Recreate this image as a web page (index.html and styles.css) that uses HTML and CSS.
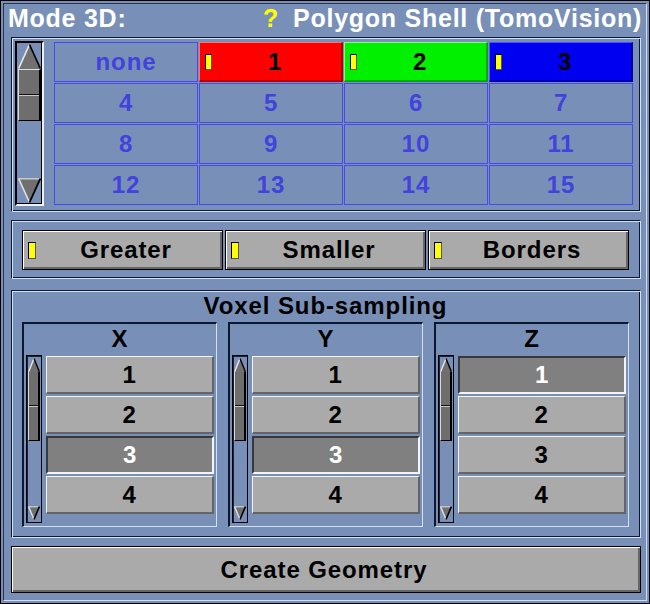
FILE: index.html
```html
<!DOCTYPE html>
<html>
<head>
<meta charset="utf-8">
<link rel="stylesheet" href="styles.css">
</head>
<body>
<div class="app">
  <div class="win">
    <div class="header">
      <span class="mode">Mode 3D:</span>
      <span class="help">?</span>
      <span class="title">Polygon Shell (TomoVision)</span>
    </div>

    <div class="panel p1">
      <div class="vscroll big">
        <svg class="arr" width="23" height="25" viewBox="0 0 23 25"><polygon points="11.5,0.5 0.5,25 22.5,25" fill="#707070"/><line x1="11.5" y1="0.5" x2="0.7" y2="24.5" stroke="#e8e8e8" stroke-width="1.6"/><line x1="11.5" y1="0.5" x2="22.3" y2="24.5" stroke="#000" stroke-width="1.6"/></svg>
        <div class="thumb"><div class="half"></div><div class="half"></div></div>
        <div class="track"></div>
        <svg class="arr" width="23" height="25" viewBox="0 0 23 25"><polygon points="0.5,0.5 22.5,0.5 11.5,24.5" fill="#707070"/><line x1="0.5" y1="0.8" x2="22.5" y2="0.8" stroke="#d0d0d0" stroke-width="1.4"/><line x1="0.7" y1="0.5" x2="11.5" y2="24.5" stroke="#e0e0e0" stroke-width="1.6"/><line x1="22.3" y1="0.5" x2="11.5" y2="24.5" stroke="#000" stroke-width="1.8"/></svg>
      </div>
      <div class="grid">
        <div class="cell">none</div>
        <div class="cell col red"><i class="ind"></i><span>1</span></div>
        <div class="cell col green"><i class="ind"></i><span>2</span></div>
        <div class="cell col blue"><i class="ind"></i><span>3</span></div>
        <div class="cell">4</div>
        <div class="cell">5</div>
        <div class="cell">6</div>
        <div class="cell">7</div>
        <div class="cell">8</div>
        <div class="cell">9</div>
        <div class="cell">10</div>
        <div class="cell">11</div>
        <div class="cell">12</div>
        <div class="cell">13</div>
        <div class="cell">14</div>
        <div class="cell">15</div>
      </div>
    </div>

    <div class="panel p2">
      <div class="btn tog"><i class="ind"></i><span>Greater</span></div>
      <div class="btn tog"><i class="ind"></i><span>Smaller</span></div>
      <div class="btn tog"><i class="ind"></i><span>Borders</span></div>
    </div>

    <div class="panel p3">
      <div class="p3-title">Voxel Sub-sampling</div>
      <div class="axes">
        <div class="axis">
          <div class="axis-label">X</div>
          <div class="axis-body">
            <div class="vscroll small">
              <svg class="sarr" width="12" height="14" viewBox="0 0 12 14"><polygon points="6,0.5 0.5,14 11.5,14" fill="#707070"/><line x1="6" y1="0.5" x2="0.6" y2="13.8" stroke="#e8e8e8" stroke-width="1.4"/><line x1="6" y1="0.5" x2="11.4" y2="13.8" stroke="#000" stroke-width="1.4"/></svg>
              <div class="sthumb"><div class="half"></div><div class="half"></div></div>
              <div class="track"></div>
              <svg class="sarr" width="12" height="14" viewBox="0 0 12 14"><polygon points="0.5,0.5 11.5,0.5 6,13.5" fill="#707070"/><line x1="0.5" y1="0.8" x2="11.5" y2="0.8" stroke="#d0d0d0" stroke-width="1.2"/><line x1="0.6" y1="0.5" x2="6" y2="13.5" stroke="#e0e0e0" stroke-width="1.4"/><line x1="11.4" y1="0.5" x2="6" y2="13.5" stroke="#000" stroke-width="1.6"/></svg>
            </div>
            <div class="list">
              <div class="item">1</div>
              <div class="item">2</div>
              <div class="item sel">3</div>
              <div class="item">4</div>
            </div>
          </div>
        </div>
        <div class="axis">
          <div class="axis-label">Y</div>
          <div class="axis-body">
            <div class="vscroll small">
              <svg class="sarr" width="12" height="14" viewBox="0 0 12 14"><polygon points="6,0.5 0.5,14 11.5,14" fill="#707070"/><line x1="6" y1="0.5" x2="0.6" y2="13.8" stroke="#e8e8e8" stroke-width="1.4"/><line x1="6" y1="0.5" x2="11.4" y2="13.8" stroke="#000" stroke-width="1.4"/></svg>
              <div class="sthumb"><div class="half"></div><div class="half"></div></div>
              <div class="track"></div>
              <svg class="sarr" width="12" height="14" viewBox="0 0 12 14"><polygon points="0.5,0.5 11.5,0.5 6,13.5" fill="#707070"/><line x1="0.5" y1="0.8" x2="11.5" y2="0.8" stroke="#d0d0d0" stroke-width="1.2"/><line x1="0.6" y1="0.5" x2="6" y2="13.5" stroke="#e0e0e0" stroke-width="1.4"/><line x1="11.4" y1="0.5" x2="6" y2="13.5" stroke="#000" stroke-width="1.6"/></svg>
            </div>
            <div class="list">
              <div class="item">1</div>
              <div class="item">2</div>
              <div class="item sel">3</div>
              <div class="item">4</div>
            </div>
          </div>
        </div>
        <div class="axis">
          <div class="axis-label">Z</div>
          <div class="axis-body">
            <div class="vscroll small">
              <svg class="sarr" width="12" height="14" viewBox="0 0 12 14"><polygon points="6,0.5 0.5,14 11.5,14" fill="#707070"/><line x1="6" y1="0.5" x2="0.6" y2="13.8" stroke="#e8e8e8" stroke-width="1.4"/><line x1="6" y1="0.5" x2="11.4" y2="13.8" stroke="#000" stroke-width="1.4"/></svg>
              <div class="sthumb"><div class="half"></div><div class="half"></div></div>
              <div class="track"></div>
              <svg class="sarr" width="12" height="14" viewBox="0 0 12 14"><polygon points="0.5,0.5 11.5,0.5 6,13.5" fill="#707070"/><line x1="0.5" y1="0.8" x2="11.5" y2="0.8" stroke="#d0d0d0" stroke-width="1.2"/><line x1="0.6" y1="0.5" x2="6" y2="13.5" stroke="#e0e0e0" stroke-width="1.4"/><line x1="11.4" y1="0.5" x2="6" y2="13.5" stroke="#000" stroke-width="1.6"/></svg>
            </div>
            <div class="list">
              <div class="item sel">1</div>
              <div class="item">2</div>
              <div class="item">3</div>
              <div class="item">4</div>
            </div>
          </div>
        </div>
      </div>
    </div>

    <div class="btn create">Create Geometry</div>
  </div>
</div>
</body>
</html>
```

FILE: styles.css
```css
html, body {
  margin: 0;
  padding: 0;
  background: #7890b8;
}

.app {
  width: 650px;
  height: 604px;
  box-sizing: border-box;
  border: 1px solid #000;
  padding: 2px;
  background: #7890b8;
  font-family: "Liberation Sans", Arial, sans-serif;
  font-weight: bold;
  font-size: 24px;
  letter-spacing: 0.9px;
}

.win {
  height: 100%;
  box-sizing: border-box;
  border: 1px solid;
  border-color: #26344c #d0dcf0 #d0dcf0 #26344c;
  display: flex;
  flex-direction: column;
}

/* header */
.header {
  display: flex;
  height: 24px;
  line-height: 24px;
  margin-top: 2px;
  padding-left: 4px;
  color: #fff;
  font-size: 25px;
  letter-spacing: 0.75px;
  white-space: nowrap;
}
.mode { width: 255px; }
.help { width: 30px; color: #ffff00; }

/* group panels */
.panel {
  box-sizing: border-box;
  width: 630px;
  margin-left: 7px;
  border: 1px solid;
  border-color: #0c1830 #d4e0f4 #d4e0f4 #0c1830;
  box-shadow: inset 1px 1px 0 #d4e0f4, inset -1px -1px 0 #0c1830;
}

.p1 {
  margin-top: 7px;
  height: 175px;
  display: flex;
  align-items: flex-start;
  padding: 3px 6px 0 3px;
}

.p2 {
  margin-top: 8px;
  height: 59px;
  display: flex;
  gap: 2px;
  padding: 9px 11px 0 10px;
}

.p3 {
  margin-top: 11px;
  height: 248px;
  padding: 3px 11px 0 10px;
}

/* scrollbars */
.vscroll {
  box-sizing: border-box;
  display: flex;
  flex-direction: column;
}
.vscroll .track { flex: 1; }
.vscroll svg { display: block; }

.big {
  width: 29px;
  height: 165px;
  border: 2px solid;
  border-color: #000 #f0f0f0 #f0f0f0 #000;
  box-shadow: inset -1px -1px 0 #000;
  padding: 1px;
}
.thumb {
  height: 52px;
  box-sizing: border-box;
  background: #6e6e6e;
  border-top: 1px solid #e0e0e0;
  border-left: 1px solid #d8d8d8;
  border-right: 2px solid #000;
  border-bottom: 1px solid #000;
  display: flex;
  flex-direction: column;
}
.half { flex: 1; }
.half + .half {
  border-top: 1px solid #c8c8c8;
  box-shadow: 0 -1px 0 #111;
}

.small {
  width: 16px;
  height: 168px;
  border: 1px solid #000;
  box-shadow: inset 1px 1px 0 #1a2438;
  padding: 2px 1px;
  margin-right: 4px;
}
.sthumb {
  height: 69px;
  box-sizing: border-box;
  background: #6e6e6e;
  border-left: 1px solid #d8d8d8;
  border-right: 2px solid #000;
  border-bottom: 1px solid #000;
  display: flex;
  flex-direction: column;
}

/* colour grid */
.grid {
  margin-left: 10px;
  margin-top: 1px;
  display: grid;
  grid-template-columns: repeat(4, 144px);
  grid-template-rows: repeat(4, 40px);
  gap: 1px;
}
.cell {
  box-sizing: border-box;
  border: 1px solid #4a4aec;
  color: #4242dc;
  display: flex;
  align-items: center;
  justify-content: center;
  line-height: 24px;
}
.cell.col {
  justify-content: flex-start;
  color: #000;
  padding: 0 3px 0 5px;
  border-width: 1px 2px 2px 1px;
}
.cell.col span { flex: 1; text-align: center; }
.red { background: #ff0000; border-color: #ff7070 #b00000 #b00000 #ff7070; }
.green { background: #00f000; border-color: #80ff80 #00a800 #00a800 #80ff80; }
.blue { background: #0000f0; border-color: #5050ff #0000a0 #0000a0 #5050ff; }

.ind {
  display: block;
  box-sizing: border-box;
  width: 7px;
  height: 16px;
  background: #ffff00;
  border: 1px solid #000;
  border-right-color: #555;
  border-bottom-color: #555;
}

/* buttons */
.btn {
  box-sizing: border-box;
  background: #aaaaaa;
  border: 1px solid #000;
  box-shadow: inset 1px 1px 0 #ffffff, inset -2px -2px 0 #666666;
  color: #000;
}
.tog {
  flex: 1;
  height: 40px;
  display: flex;
  align-items: center;
  padding: 0 6px 0 5px;
}
.tog .ind { width: 8px; height: 17px; }
.tog span { flex: 1; text-align: center; line-height: 24px; }

.create {
  margin-top: 8px;
  margin-left: 7px;
  width: 630px;
  height: 47px;
  line-height: 45px;
  text-align: center;
  padding-right: 4px;
}

/* voxel sub-sampling */
.p3-title {
  height: 24px;
  line-height: 24px;
  text-align: center;
  color: #000;
}
.axes {
  display: flex;
  gap: 11px;
  margin-top: 4px;
}
.axis {
  box-sizing: border-box;
  width: 195px;
  height: 205px;
  border-style: solid;
  border-width: 2px 1px 1px 2px;
  border-color: #0c1830 #d4e0f4 #d4e0f4 #0c1830;
  padding: 3px 2px 0 2px;
}
.axis-label {
  height: 24px;
  line-height: 24px;
  text-align: center;
  color: #000;
}
.axis-body {
  display: flex;
  align-items: flex-start;
  margin-top: 4px;
}
.list {
  flex: 1;
  margin-top: 1px;
  display: flex;
  flex-direction: column;
  gap: 2px;
}
.item {
  box-sizing: border-box;
  height: 38px;
  line-height: 35px;
  text-align: center;
  background: #aaaaaa;
  border-style: solid;
  border-width: 1px 2px 2px 1px;
  border-color: #f4f4f4 #646464 #646464 #f4f4f4;
  color: #000;
}
.item.sel {
  background: #808080;
  color: #fff;
  border-width: 2px 2px 2px 2px;
  border-color: #383838 #f4f4f4 #f4f4f4 #383838;
  line-height: 34px;
}
```
